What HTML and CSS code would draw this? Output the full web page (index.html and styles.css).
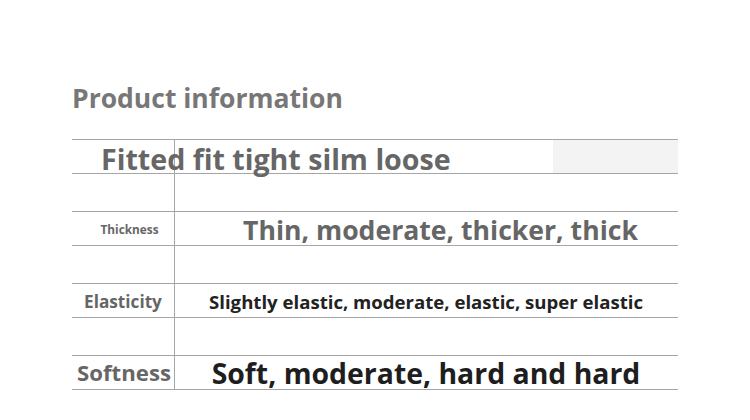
FILE: index.html
```html
<!DOCTYPE html>
<html>
<head>
<meta charset="utf-8">
<link rel="stylesheet" href="styles.css">
</head>
<body>
<div class="page">
  <h1 class="title">Product information</h1>
  <div class="table">
    <div class="row first">
      <div class="full">Fitted fit tight silm loose</div>
      <div class="shade"></div>
    </div>
    <div class="row gap"><div></div><div class="val"></div></div>
    <div class="row">
      <div class="label thick">Thickness</div>
      <div class="val v-thick">Thin, moderate, thicker, thick</div>
    </div>
    <div class="row gap"><div></div><div class="val"></div></div>
    <div class="row">
      <div class="label elas">Elasticity</div>
      <div class="val v-elas">Slightly elastic, moderate, elastic, super elastic</div>
    </div>
    <div class="row gap"><div></div><div class="val"></div></div>
    <div class="row last">
      <div class="label soft">Softness</div>
      <div class="val v-soft">Soft, moderate, hard and hard</div>
    </div>
  </div>
</div>
</body>
</html>
```
FILE: styles.css
```css
* { box-sizing: border-box; }
html, body { margin: 0; padding: 0; background: #fff; }
body { font-family: "Open Sans", "Noto Sans", sans-serif; font-weight: 700; }
.page { width: 750px; height: 420px; padding: 81px 0 0 72px; }
.title {
  margin: 0 0 23px 0;
  font-size: 26.5px;
  line-height: 35px;
  font-weight: 700;
  color: #777;
}
.table {
  width: 606px;
  background: linear-gradient(#a6a6a6, #a6a6a6) 102px 0 / 1px 100% no-repeat;
}
.row {
  display: grid;
  grid-template-columns: 102px 1fr;
  grid-template-rows: 33px;
  height: 34px;
  border-top: 1px solid #a6a6a6;
}
.row.gap { height: 38px; grid-template-rows: 37px; }
.row.last { border-bottom: 1px solid #a6a6a6; height: 35px; }
.row.first { grid-template-columns: 1fr 125px; }
.full {
  padding: 3px 0 0 29px;
  font-size: 28.6px;
  line-height: 31px;
  color: #666;
  white-space: nowrap;
}
.shade { background: #f3f3f3; }
.label, .val { display: flex; align-items: center; white-space: nowrap; line-height: 1; }
.label { justify-content: center; color: #666; }
.val { justify-content: center; }
.thick { font-size: 11.8px; padding-left: 13px; padding-top: 2px; }
.elas { font-size: 17.2px; padding-top: 3px; }
.soft { font-size: 22.2px; padding-left: 2px; padding-top: 2px; }
.v-thick { font-size: 26.6px; color: #666; padding-left: 29px; padding-top: 4px; }
.v-elas { font-size: 18.6px; color: #222; padding-top: 3px; }
.v-soft { font-size: 28.4px; color: #1e1e1e; padding-top: 2px; }
```
